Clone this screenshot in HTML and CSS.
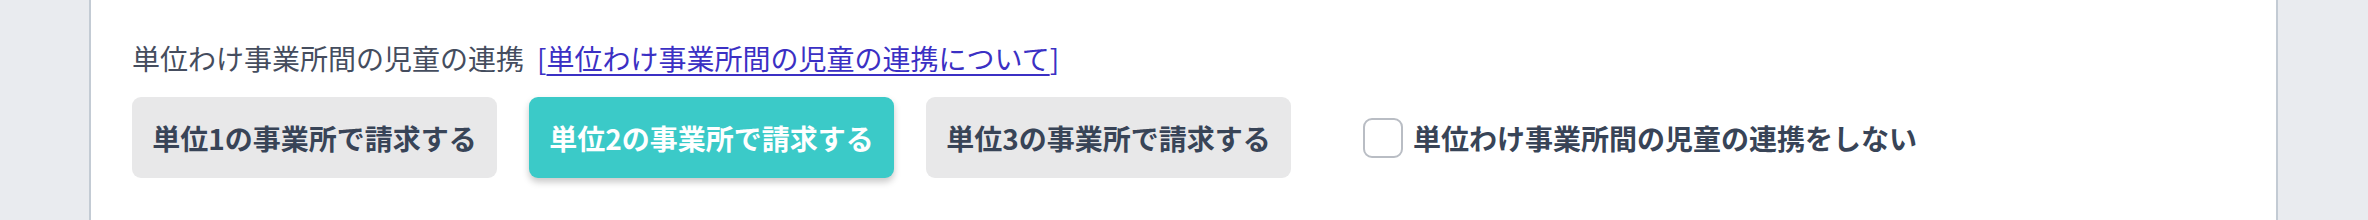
FILE: index.html
```html
<!DOCTYPE html>
<html lang="ja">
<head>
<meta charset="utf-8">
<link rel="stylesheet" href="styles.css">
</head>
<body>
<div class="page">
  <section class="card">
    <div class="field-label">
      <span class="label-text">単位わけ事業所間の児童の連携</span>
      <span class="link-wrap">[<a class="help-link" href="#">単位わけ事業所間の児童の連携について</a>]</span>
    </div>
    <div class="options">
      <button class="opt-btn" type="button">単位1の事業所で請求する</button>
      <button class="opt-btn opt-active" type="button">単位2の事業所で請求する</button>
      <button class="opt-btn" type="button">単位3の事業所で請求する</button>
      <label class="check">
        <span class="check-box"></span>
        <span class="check-text">単位わけ事業所間の児童の連携をしない</span>
      </label>
    </div>
  </section>
</div>
</body>
</html>
```
FILE: styles.css
```css
html, body {
  margin: 0;
  padding: 0;
  height: 100%;
}
body {
  background: #e9ebef;
  font-family: "Noto Sans CJK JP", "Noto Sans", sans-serif;
  overflow: hidden;
}
.page {
  display: flex;
  height: 220px;
  padding: 0 90px 0 89px;
}
.card {
  flex: 1;
  background: #ffffff;
  border-left: 2px solid #c3cbd4;
  border-right: 2px solid #c3cbd4;
  padding: 38px 41px 0 41px;
}
.field-label {
  display: flex;
  align-items: baseline;
  gap: 13px;
  font-size: 28px;
  line-height: 40px;
  color: #454d5e;
}
.link-wrap {
  color: #3b30c4;
}
.help-link {
  color: #3b30c4;
  text-decoration: underline;
  text-underline-offset: 4px;
  text-decoration-thickness: 2px;
}
.options {
  display: flex;
  align-items: center;
  gap: 32px;
  margin-top: 19px;
}
.opt-btn {
  height: 81px;
  width: 365px;
  border: none;
  border-radius: 9px;
  background: #e8e8e9;
  color: #384457;
  font-family: "Noto Sans CJK JP", "Noto Sans", sans-serif;
  font-size: 28px;
  font-weight: 700;
  padding: 0;
  display: flex;
  align-items: center;
  justify-content: center;
}
.opt-active {
  background: #3bcac8;
  color: #ffffff;
  box-shadow: 0 4px 7px rgba(0, 0, 0, 0.22);
}
.check {
  display: flex;
  align-items: center;
  gap: 10px;
  margin-left: 40px;
}
.check-box {
  width: 36px;
  height: 36px;
  border: 2px solid #b9bdc4;
  border-radius: 9px;
  background: #ffffff;
}
.check-text {
  font-size: 28px;
  font-weight: 700;
  color: #384457;
}
```
